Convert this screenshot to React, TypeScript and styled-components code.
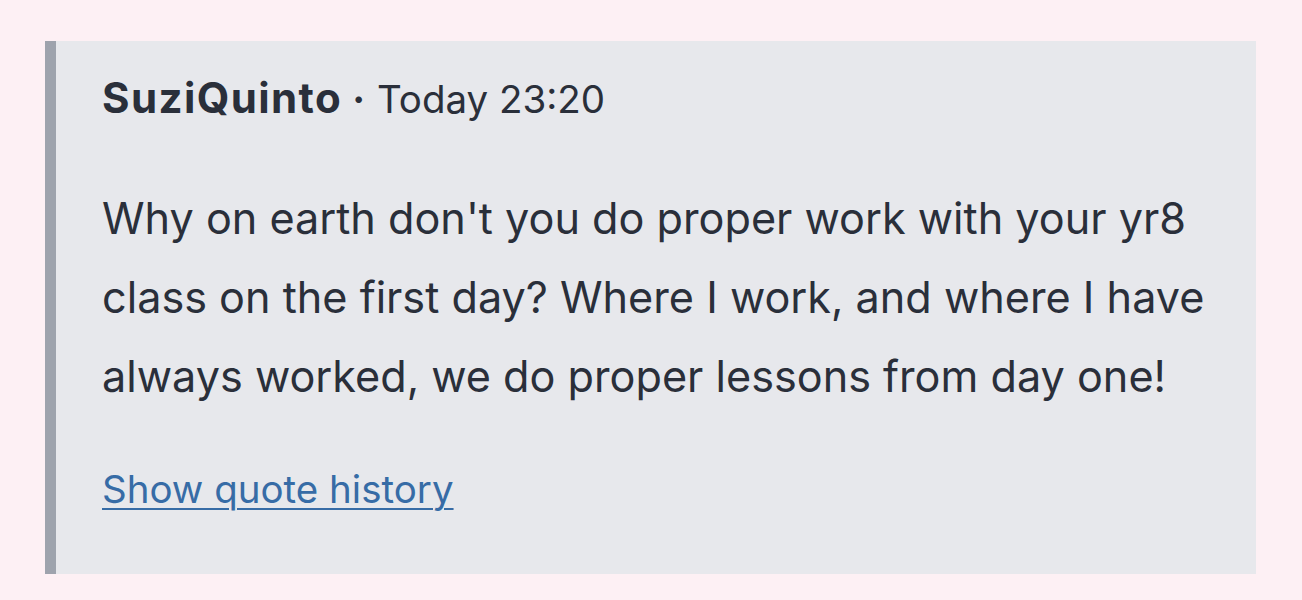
import styled, { createGlobalStyle } from 'styled-components';

const GlobalStyle = createGlobalStyle`
    html, body {
        margin: 0;
        padding: 0;
        background: #fdf0f4;
    }
    body {
        font-family: Inter, "Noto Sans", sans-serif;
        -webkit-font-smoothing: antialiased;
    }
`;

const Page = styled.div`
    padding: 41px 46px 26px 45px;
`;

const Quote = styled.blockquote`
    margin: 0;
    display: flex;
    flex-direction: column;
    align-items: flex-start;
    background-color: #e7e8ec;
    border-left: 11px solid #9ea3ad;
    padding: 33px 40px 61px 46px;
    color: #2a2f3a;
`;

const Header = styled.div`
    display: flex;
    align-items: baseline;
    height: 48px;
    line-height: 48px;
`;

const Author = styled.span`
    font-size: 42px;
    font-weight: 700;
    letter-spacing: 1.4px;
`;

const Dot = styled.span`
    font-size: 38.5px;
    font-weight: 700;
    margin: 0 12px 0 10px;
`;

const Time = styled.span`
    font-size: 38.5px;
    font-weight: 400;
`;

const Body = styled.p`
    margin: 57px 0 0;
    font-size: 43.2px;
    line-height: 79px;
`;

const HistoryLink = styled.a`
    margin-top: 49px;
    font-size: 38.5px;
    line-height: 48px;
    color: #376ca6;
    text-decoration: underline;
    text-underline-offset: 5px;
    text-decoration-thickness: 2px;
`;

function App() {
    return (
        <Page>
            <GlobalStyle />
            <Quote>
                <Header>
                    <Author>SuziQuinto</Author>
                    <Dot>·</Dot>
                    <Time>Today 23:20</Time>
                </Header>
                <Body>
                    Why on earth don't you do proper work with your yr8 class on the first day? Where I work, and where I have always worked, we do proper lessons from day one!
                </Body>
                <HistoryLink href="#">Show quote history</HistoryLink>
            </Quote>
        </Page>
    );
}

export default App;
